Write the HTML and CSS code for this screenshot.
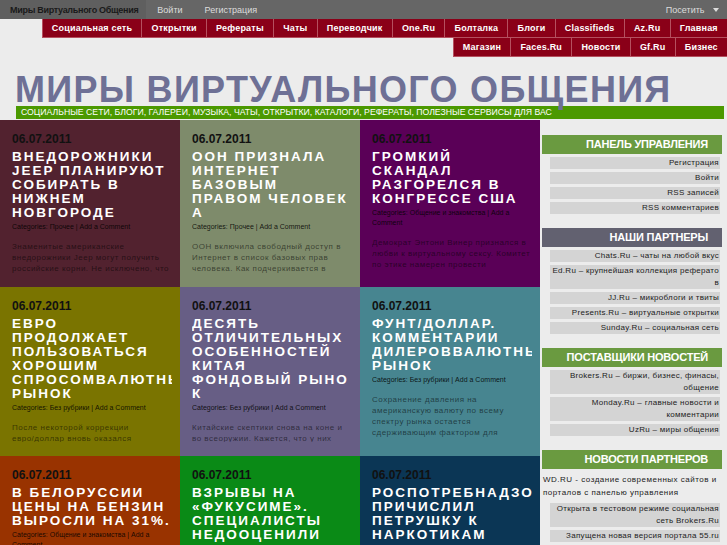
FILE: index.html
```html
<!DOCTYPE html>
<html lang="ru">
  <head>
    <meta charset="UTF-8" />
    <title>Миры Виртуального Общения</title>
    <link rel="stylesheet" href="styles.css">
  </head>
  <body>
    <div class="topbar">
      <span class="brand">Миры Виртуального Общения</span>
      <a href="#">Войти</a>
      <a href="#">Регистрация</a>
      <span class="visit">Посетить <span class="caret"></span></span>
    </div>

    <nav class="menu">
      <a href="#">Социальная сеть</a>
      <a href="#">Открытки</a>
      <a href="#">Рефераты</a>
      <a href="#">Чаты</a>
      <a href="#">Переводчик</a>
      <a href="#">One.Ru</a>
      <a href="#">Болталка</a>
      <a href="#">Блоги</a>
      <a href="#">Classifieds</a>
      <a href="#">Az.Ru</a>
      <a href="#">Главная</a>
      <a href="#">Магазин</a>
      <a href="#">Faces.Ru</a>
      <a href="#">Новости</a>
      <a href="#">Gf.Ru</a>
      <a href="#">Бизнес</a>
    </nav>

    <div class="site-head">
      <h1>МИРЫ ВИРТУАЛЬНОГО ОБЩЕНИЯ</h1>
      <div class="tagline">Социальные сети, блоги, галереи, музыка, чаты, открытки, каталоги, рефераты, полезные сервисы для вас</div>
    </div>

    <div class="main">
      <div class="tiles">
        <div class="tile maroon">
          <div class="tile-inner">
            <div class="date">06.07.2011</div>
            <h2>Внедорожники Jeep планируют собирать в Нижнем Новгороде</h2>
            <div class="meta">Categories: Прочее | Add a Comment</div>
            <p>Знаменитые американские внедорожники Jeep могут получить российские корни. Не исключено, что</p>
          </div>
        </div>
        <div class="tile sage">
          <div class="tile-inner">
            <div class="date">06.07.2011</div>
            <h2>ООН признала Интернет базовым правом человек<wbr>а</h2>
            <div class="meta">Categories: Прочее | Add a Comment</div>
            <p>ООН включила свободный доступ в Интернет в список базовых прав человека. Как подчеркивается в</p>
          </div>
        </div>
        <div class="tile purple">
          <div class="tile-inner">
            <div class="date">06.07.2011</div>
            <h2>Громкий скандал разгорелся в Конгрессе США</h2>
            <div class="meta">Categories: Общение и знакомства | Add a Comment</div>
            <p>Демократ Энтони Винер признался в любви к виртуальному сексу. Комитет по этике намерен провести</p>
          </div>
        </div>
        <div class="tile olive">
          <div class="tile-inner">
            <div class="date">06.07.2011</div>
            <h2>Евро продолжает пользоваться хорошим спросомвалютный рынок</h2>
            <div class="meta">Categories: Без рубрики | Add a Comment</div>
            <p>После некоторой коррекции евро/&#8288;доллар вновь оказался</p>
          </div>
        </div>
        <div class="tile slate">
          <div class="tile-inner">
            <div class="date">06.07.2011</div>
            <h2>Десять отличительных особенностей Китая фондовый рыно<wbr>к</h2>
            <div class="meta">Categories: Без рубрики | Add a Comment</div>
            <p>Китайские скептики снова на коне и во всеоружии. Кажется, что у них</p>
          </div>
        </div>
        <div class="tile teal">
          <div class="tile-inner">
            <div class="date">06.07.2011</div>
            <h2>Фунт/доллар. Комментарии дилероввалютный рынок</h2>
            <div class="meta">Categories: Без рубрики | Add a Comment</div>
            <p>Сохранение давления на американскую валюту по всему спектру рынка остается сдерживающим фактором для</p>
          </div>
        </div>
        <div class="tile rust">
          <div class="tile-inner">
            <div class="date">06.07.2011</div>
            <h2>В Белоруссии цены на бензин выросли на 31%.</h2>
            <div class="meta">Categories: Общение и знакомства | Add a Comment</div>
            <p>Цены на бензин в Белоруссии выросли</p>
          </div>
        </div>
        <div class="tile green">
          <div class="tile-inner">
            <div class="date">06.07.2011</div>
            <h2>Взрывы на «Фукусиме». Специалисты недооценили</h2>
            <div class="meta">Categories: Прочее | Add a Comment</div>
          </div>
        </div>
        <div class="tile navy">
          <div class="tile-inner">
            <div class="date">06.07.2011</div>
            <h2>Роспотребнадзор причислил петрушку к наркотикам</h2>
            <div class="meta">Categories: Прочее | Add a Comment</div>
          </div>
        </div>
      </div>

      <aside class="sidebar">
        <div class="widget">
          <h3>Панель управления</h3>
          <ul>
            <li><a href="#">Регистрация</a></li>
            <li><a href="#">Войти</a></li>
            <li><a href="#">RSS записей</a></li>
            <li><a href="#">RSS комментариев</a></li>
          </ul>
        </div>
        <div class="widget">
          <h3 class="dark">Наши партнеры</h3>
          <ul>
            <li><a href="#">Chats.Ru – чаты на любой вкус</a></li>
            <li><a href="#">Ed.Ru – крупнейшая коллекция реферато<br>в</a></li>
            <li><a href="#">JJ.Ru – микроблоги и твиты</a></li>
            <li><a href="#">Presents.Ru – виртуальные открытки</a></li>
            <li><a href="#">Sunday.Ru – социальная сеть</a></li>
          </ul>
        </div>
        <div class="widget">
          <h3>Поставщики новостей</h3>
          <ul>
            <li><a href="#">Brokers.Ru – биржи, бизнес, финасы, общение</a></li>
            <li><a href="#">Monday.Ru – главные новости и комментарии</a></li>
            <li><a href="#">UzRu – миры общения</a></li>
          </ul>
        </div>
        <div class="widget">
          <h3>Новости партнеров</h3>
          <div class="note">WD.RU - создание современных сайтов и порталов с панелью управления</div>
          <ul>
            <li><a href="#">Открыта в тестовом режиме социальная сеть Brokers.Ru</a></li>
            <li><a href="#">Запущена новая версия портала 55.ru</a></li>
          </ul>
        </div>
      </aside>
    </div>
  </body>
</html>
```

FILE: styles.css
```css
body {
  margin: 0;
  background: #ececec;
  font-family: "Liberation Sans", Arial, sans-serif;
  color: #222;
  overflow: hidden;
}
a {
  text-decoration: none;
  color: inherit;
}

/* top grey bar */
.topbar {
  display: flex;
  align-items: center;
  height: 19px;
  background: #666;
  font-size: 9px;
  color: #ddd;
}
.topbar .brand {
  display: flex;
  align-items: center;
  height: 100%;
  padding: 0 8px 0 10px;
  background: #5f5f5f;
  color: #1a1a1a;
  font-weight: bold;
  font-size: 9px;
  letter-spacing: -0.3px;
}
.topbar a {
  padding: 0 11px;
}
.topbar .visit {
  margin-left: auto;
  margin-right: 8px;
}
.caret {
  display: inline-block;
  margin-left: 6px;
  border-left: 3px solid transparent;
  border-right: 3px solid transparent;
  border-top: 4px solid #ddd;
  vertical-align: middle;
}

/* red menu */
.menu {
  display: flex;
  flex-wrap: wrap;
  justify-content: flex-end;
  margin-left: 40px;
}
.menu a {
  background: #8a0018;
  color: #fff;
  font-weight: bold;
  font-size: 9px;
  letter-spacing: 0.2px;
  line-height: 18px;
  padding: 0 9.2px;
  border-left: 1px solid #b5505f;
  border-bottom: 1px solid #b5505f;
}

/* site title */
.site-head h1 {
  margin: 17px 0 0 15px;
  font-size: 36px;
  line-height: 32px;
  color: #6e7095;
  letter-spacing: 1.3px;
}
.tagline {
  margin: 0 3px 1px 16px;
  padding-left: 5px;
  background: #4b9900;
  color: #fff;
  font-size: 8.7px;
  line-height: 13px;
  text-transform: uppercase;
}

.main {
  display: flex;
}

/* news tiles */
.tiles {
  display: grid;
  grid-template-columns: repeat(3, 180px);
  grid-template-rows: 167px 169px 167px;
  width: 540px;
}
.tile {
  padding: 12px 8px 0 12px;
}
.tile-inner {
  height: 143px;
  overflow: hidden;
}
.tile .date {
  font-size: 12px;
  font-weight: bold;
  line-height: 14px;
  color: #111;
  margin-bottom: 4px;
}
.tile h2 {
  margin: 0;
  font-size: 13.5px;
  line-height: 14px;
  letter-spacing: 2px;
  text-transform: uppercase;
  color: #fff;
}
.tile .meta {
  margin-top: 2px;
  font-size: 7px;
  line-height: 10px;
  color: rgba(0, 0, 0, 0.85);
}
.tile p {
  margin: 9px 0 0;
  font-size: 8px;
  line-height: 11px;
  letter-spacing: 0.5px;
  color: rgba(0, 0, 0, 0.55);
}
.maroon { background: #52222f; }
.sage { background: #7e8b6b; }
.purple { background: #5a0057; }
.olive { background: #7a7400; }
.slate { background: #675e85; }
.teal { background: #478590; }
.rust { background: #993300; }
.green { background: #0a8a16; }
.navy { background: #0b3655; }

/* sidebar */
.sidebar {
  width: 180px;
  margin-left: 2px;
  padding-top: 15px;
}
.widget {
  margin-bottom: 14px;
}
.widget h3 {
  margin: 0 0 3px;
  background: #6a9a40;
  color: #fff;
  font-size: 11px;
  line-height: 19px;
  letter-spacing: -0.2px;
  text-transform: uppercase;
  text-align: right;
  padding-right: 14px;
}
.widget h3.dark {
  background: #626170;
}
.widget ul {
  list-style: none;
  margin: 0;
  padding: 0;
}
.widget li {
  margin: 0 2px 3px 8px;
  background: #d4d4d4;
  font-size: 8px;
  line-height: 12px;
  letter-spacing: 0.3px;
  text-align: right;
  padding-right: 1px;
  color: #222;
}
.note {
  font-size: 8px;
  line-height: 13px;
  letter-spacing: 0.5px;
  padding: 1px 0 4px 1px;
}
```
